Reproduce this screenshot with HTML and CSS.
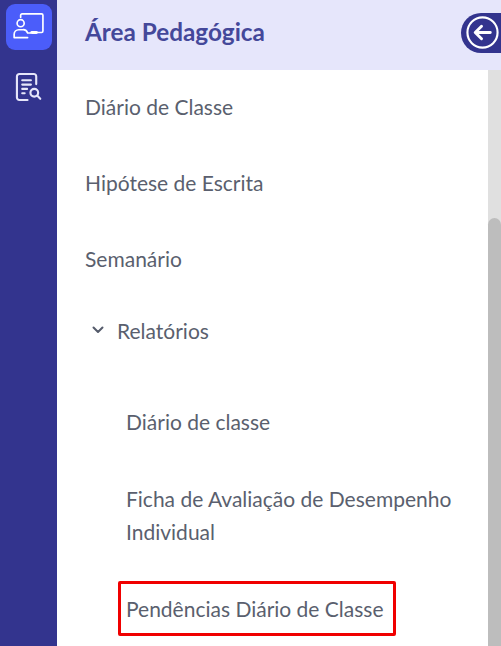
FILE: index.html
```html
<!DOCTYPE html>
<html lang="pt-BR">
    <head>
        <meta charset="utf-8" />
        <title>Área Pedagógica</title>
        <link rel="stylesheet" href="styles.css">
    </head>
    <body>
        <nav class="rail">
            <a class="rail-item active">
                <svg width="32" height="26" viewBox="0 0 34 28" fill="none" stroke="#fff" stroke-width="1.8" stroke-linecap="round" stroke-linejoin="round">
                    <path d="M8 4.500V2.500a1.500 1.500 0 0 1 1.500-1.500h21a1.500 1.500 0 0 1 1.500 1.500v17a1.500 1.500 0 0 1-1.500 1.500H26"/>
                    <path d="M20 21h5" stroke-width="3.200"/>
                    <circle cx="8" cy="11" r="3.800"/>
                    <path d="M1 26.500v-3.500a5 5 0 0 1 5-5h4.500a5 5 0 0 1 5 3.500h3M1 26.500h14.500"/>
                </svg>
            </a>
            <a class="rail-item">
                <svg width="27" height="30" viewBox="0 0 28 30" fill="none" stroke="#e6e6fa" stroke-width="2.200" stroke-linecap="round" stroke-linejoin="round">
                    <path d="M22 12V4a2.500 2.500 0 0 0-2.500-2.500h-15A2.500 2.500 0 0 0 2 4v22a2.500 2.500 0 0 0 2.500 2.500H13"/>
                    <path d="M7.500 8h9M7.500 12.500h9M7.500 17h5M7.500 21.500h2.500"/>
                    <circle cx="20" cy="21" r="4"/>
                    <path d="M23.200 24.200l3 3"/>
                </svg>
            </a>
        </nav>
        <div class="panel">
            <header class="panel-head">
                <h1>Área Pedagógica</h1>
                <button class="collapse">
                    <svg width="35" height="35" viewBox="0 0 36 36" fill="none" stroke="#fff" stroke-linecap="round" stroke-linejoin="round">
                        <circle cx="18" cy="18" r="15.500" stroke-width="2.200"/>
                        <path d="M26 18H11M17 11.500L10.500 18l6.500 6.500" stroke-width="3"/>
                    </svg>
                </button>
            </header>
            <div class="panel-body">
                <ul class="menu">
                    <li class="menu-item">Diário de Classe</li>
                    <li class="menu-item">Hipótese de Escrita</li>
                    <li class="menu-item short">Semanário</li>
                    <li class="menu-group">
                        <svg width="12" height="8" viewBox="0 0 12 8" fill="none" stroke="#555b6b" stroke-width="2" stroke-linecap="round" stroke-linejoin="round">
                            <path d="M1.500 1.500L6 6l4.500-4.500"/>
                        </svg>
                        <span>Relatórios</span>
                    </li>
                    <li class="sub-item first">Diário de classe</li>
                    <li class="sub-item wrap">Ficha de Avaliação de Desempenho Individual</li>
                    <li class="sub-item"><span class="mark">Pendências Diário de Classe</span></li>
                </ul>
                <div class="scroll"><div class="thumb"></div></div>
            </div>
        </div>
    </body>
</html>
```
FILE: styles.css
```css
html,
body {
    margin: 0;
    height: 100%;
}
body {
    display: flex;
    height: 646px;
    overflow: hidden;
    font-family: "Lato", "Noto Sans", sans-serif;
    background-color: #ffffff;
    color: #5a5f6e;
}
.rail {
    width: 57px;
    flex: none;
    background-color: #33348e;
    display: flex;
    flex-direction: column;
    align-items: center;
    padding-top: 4px;
    box-sizing: border-box;
}
.rail-item {
    width: 46px;
    height: 46px;
    box-sizing: border-box;
    padding-bottom: 3px;
    display: flex;
    align-items: center;
    justify-content: center;
    border-radius: 9px;
    margin-bottom: 15px;
}
.rail-item.active {
    background-color: #4b5dfa;
}
.panel {
    flex: 1;
    display: flex;
    flex-direction: column;
    min-width: 0;
}
.panel-head {
    height: 70px;
    box-sizing: border-box;
    flex: none;
    background-color: #e6e6fb;
    display: flex;
    align-items: center;
    justify-content: space-between;
    padding-left: 28px;
    padding-bottom: 5px;
}
.panel-head h1 {
    margin: 0 0 2px 0;
    font-size: 24.3px;
    font-weight: 700;
    color: #44489a;
}
.collapse {
    width: 40px;
    height: 40px;
    border: none;
    padding: 0 0 0 4px;
    background-color: #33348e;
    border-radius: 20px 0 0 20px;
    display: flex;
    align-items: center;
}
.panel-body {
    flex: 1;
    display: flex;
    min-height: 0;
}
.menu {
    flex: 1;
    list-style: none;
    margin: -1px 0 0 0;
    padding: 0;
    font-size: 21px;
}
.menu-item {
    height: 76px;
    line-height: 76px;
    padding-left: 28px;
}
.menu-item.short {
    height: 75px;
    line-height: 75px;
}
.menu-group {
    height: 68px;
    display: flex;
    align-items: center;
    gap: 13px;
    padding-left: 35px;
}
.sub-item {
    padding-left: 69px;
    line-height: 33px;
    padding-right: 20px;
}
.sub-item.first {
    margin-top: 41px;
    margin-bottom: 44px;
}
.sub-item.wrap {
    margin-bottom: 33px;
}
.mark {
    display: block;
    width: fit-content;
    margin-left: -8px;
    padding: 0 9px 0 5px;
    line-height: 49px;
    border: 3px solid #f00000;
    border-radius: 2px;
    white-space: nowrap;
}
.scroll {
    width: 13px;
    flex: none;
    background-color: #e0e0e0;
    display: flex;
    align-items: flex-end;
}
.thumb {
    width: 100%;
    height: 428px;
    background-color: #bdbdbd;
    border-radius: 7px 7px 0 0;
}
```
